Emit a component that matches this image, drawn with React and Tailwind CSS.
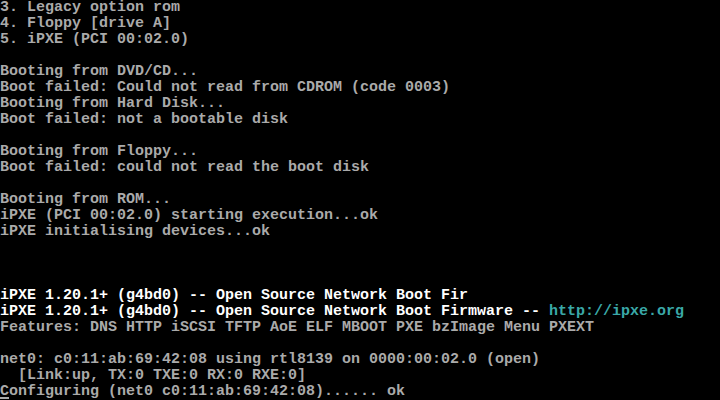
export default function App() {
  const lines = [
    "3. Legacy option rom",
    "4. Floppy [drive A]",
    "5. iPXE (PCI 00:02.0)",
    "",
    "Booting from DVD/CD...",
    "Boot failed: Could not read from CDROM (code 0003)",
    "Booting from Hard Disk...",
    "Boot failed: not a bootable disk",
    "",
    "Booting from Floppy...",
    "Boot failed: could not read the boot disk",
    "",
    "Booting from ROM...",
    "iPXE (PCI 00:02.0) starting execution...ok",
    "iPXE initialising devices...ok",
    "",
    "",
    "",
  ];

  return (
    <div className="w-[720px] h-[400px] bg-black overflow-hidden text-[#aaaaaa] font-['Liberation_Mono',monospace] text-[15px] leading-[16px] font-bold whitespace-pre">
      {lines.map((l, i) => (
        <div key={i} className="h-[16px]">{l}</div>
      ))}
      <div className="h-[16px] text-white">iPXE 1.20.1+ (g4bd0) -- Open Source Network Boot Fir</div>
      <div className="h-[16px] text-white">
        iPXE 1.20.1+ (g4bd0) -- Open Source Network Boot Firmware -- <span className="text-[#3aa8a8]">http://ipxe.org</span>
      </div>
      <div className="h-[16px]">Features: DNS HTTP iSCSI TFTP AoE ELF MBOOT PXE bzImage Menu PXEXT</div>
      <div className="h-[16px]"></div>
      <div className="h-[16px]">net0: c0:11:ab:69:42:08 using rtl8139 on 0000:00:02.0 (open)</div>
      <div className="h-[16px]">  [Link:up, TX:0 TXE:0 RX:0 RXE:0]</div>
      <div className="h-[16px] relative">
        Configuring (net0 c0:11:ab:69:42:08)...... ok
        <span className="absolute left-0 bottom-[1px] w-[9px] h-[2px] bg-[#aaaaaa]"></span>
      </div>
    </div>
  );
}
